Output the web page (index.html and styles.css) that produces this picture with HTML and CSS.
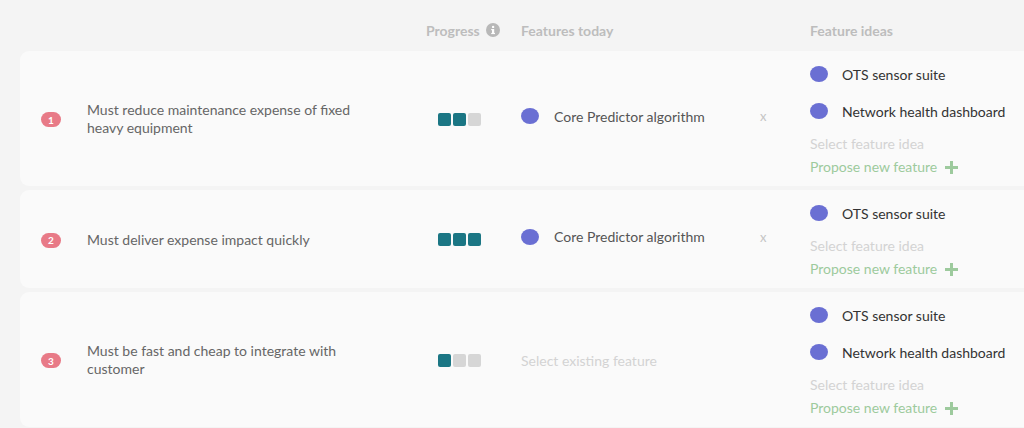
FILE: index.html
```html
<!DOCTYPE html>
<html>
<head>
<meta charset="utf-8">
<link rel="stylesheet" href="styles.css">
</head>
<body>
<div class="page">
  <div class="header">
    <div></div>
    <div></div>
    <div class="hcell">Progress
      <svg class="info" width="14" height="14" viewBox="0 0 14 14"><circle cx="7" cy="7" r="7" fill="#b8b8b8"/><rect x="6" y="6" width="2.2" height="5" fill="#fff"/><rect x="5.2" y="6" width="2" height="1.2" fill="#fff"/><rect x="5.2" y="9.9" width="3.8" height="1.2" fill="#fff"/><circle cx="7.1" cy="3.9" r="1.2" fill="#fff"/></svg>
    </div>
    <div class="hcell">Features today</div>
    <div class="hcell">Feature ideas</div>
  </div>

  <div class="card">
    <div class="badgecol"><span class="badge">1</span></div>
    <div class="need"><p>Must reduce maintenance expense of fixed heavy equipment</p></div>
    <div class="progress"><span class="sq on"></span><span class="sq on"></span><span class="sq"></span></div>
    <div class="today">
      <span class="dot"></span><span class="fname">Core Predictor algorithm</span><span class="remove">x</span>
    </div>
    <div class="ideas">
      <div class="idea first"><span class="dot"></span><span>OTS sensor suite</span></div>
      <div class="idea"><span class="dot"></span><span>Network health dashboard</span></div>
      <div class="select">Select feature idea</div>
      <div class="propose">Propose new feature <span class="plus"></span></div>
    </div>
  </div>

  <div class="card">
    <div class="badgecol"><span class="badge">2</span></div>
    <div class="need"><p>Must deliver expense impact quickly</p></div>
    <div class="progress"><span class="sq on"></span><span class="sq on"></span><span class="sq on"></span></div>
    <div class="today">
      <span class="dot"></span><span class="fname">Core Predictor algorithm</span><span class="remove">x</span>
    </div>
    <div class="ideas">
      <div class="idea first"><span class="dot"></span><span>OTS sensor suite</span></div>
      <div class="select">Select feature idea</div>
      <div class="propose">Propose new feature <span class="plus"></span></div>
    </div>
  </div>

  <div class="card">
    <div class="badgecol"><span class="badge">3</span></div>
    <div class="need"><p>Must be fast and cheap to integrate with customer</p></div>
    <div class="progress"><span class="sq on"></span><span class="sq"></span><span class="sq"></span></div>
    <div class="today">
      <span class="placeholder">Select existing feature</span>
    </div>
    <div class="ideas">
      <div class="idea first"><span class="dot"></span><span>OTS sensor suite</span></div>
      <div class="idea"><span class="dot"></span><span>Network health dashboard</span></div>
      <div class="select">Select feature idea</div>
      <div class="propose">Propose new feature <span class="plus"></span></div>
    </div>
  </div>
</div>
</body>
</html>
```

FILE: styles.css
```css
html, body {
  margin: 0;
  padding: 0;
  background: #f4f4f4;
  overflow: hidden;
}
body {
  font-family: Lato, "Open Sans", "Liberation Sans", sans-serif;
  font-size: 14px;
  color: #666;
}
.page {
  padding: 20px 0 0 20px;
  width: 1030px;
  display: flex;
  flex-direction: column;
  gap: 4px;
}
.header, .card {
  display: grid;
  grid-template-columns: 46px 351px 83px 289px 1fr;
  padding-left: 21px;
}
.header {
  height: 20px;
  align-items: center;
  margin-bottom: 7px;
}
.hcell {
  font-weight: 700;
  color: #bdbdbd;
  font-size: 14px;
  display: flex;
  align-items: center;
  gap: 6px;
  margin-left: -12px;
}
.hcell:nth-child(4), .hcell:nth-child(5) { margin-left: 0; }
.info { display: block; }
.card {
  background: #fafafa;
  border-radius: 9px;
  align-items: center;
  padding-top: 10px;
  padding-bottom: 9px;
}
.badgecol { display: flex; align-items: center; }
.badge {
  display: inline-flex;
  align-items: center;
  justify-content: center;
  width: 20px;
  height: 15px;
  border-radius: 8px;
  background: #e87a87;
  color: #fff;
  font-weight: 700;
  font-size: 10px;
  margin-top: 1px;
}
.need p {
  margin: 0;
  max-width: 285px;
  line-height: 18px;
  color: #666;
}
.progress { display: flex; gap: 2px; }
.sq {
  width: 13px;
  height: 13px;
  border-radius: 2px;
  background: #d6d6d6;
}
.sq.on { background: #1b7684; }
.today {
  display: flex;
  align-items: center;
  margin-top: -6px;
}
.dot {
  width: 18px;
  height: 16px;
  border-radius: 50%;
  background: #6a6fd3;
  flex: none;
}
.fname {
  margin-left: 15px;
  width: 206px;
  color: #555;
}
.remove {
  color: #c4c4c4;
  font-size: 13px;
}
.placeholder { color: #d3d3d3; margin-top: 6px; }
.ideas { display: flex; flex-direction: column; }
.idea {
  display: flex;
  align-items: center;
  gap: 14px;
  height: 26px;
  margin-top: 11px;
  color: #333;
}
.idea.first { margin-top: 0; }
.select {
  height: 20px;
  line-height: 20px;
  margin-top: 10px;
  color: #d3d3d3;
}
.propose {
  height: 20px;
  line-height: 20px;
  margin-top: 3px;
  color: #9dca9d;
  display: flex;
  align-items: center;
  gap: 8px;
}
.plus {
  position: relative;
  width: 13px;
  height: 13px;
}
.plus::before, .plus::after {
  content: "";
  position: absolute;
  background: #9dca9d;
}
.plus::before { left: 5px; top: 0; width: 3px; height: 13px; }
.plus::after { top: 5px; left: 0; height: 3px; width: 13px; }
```
